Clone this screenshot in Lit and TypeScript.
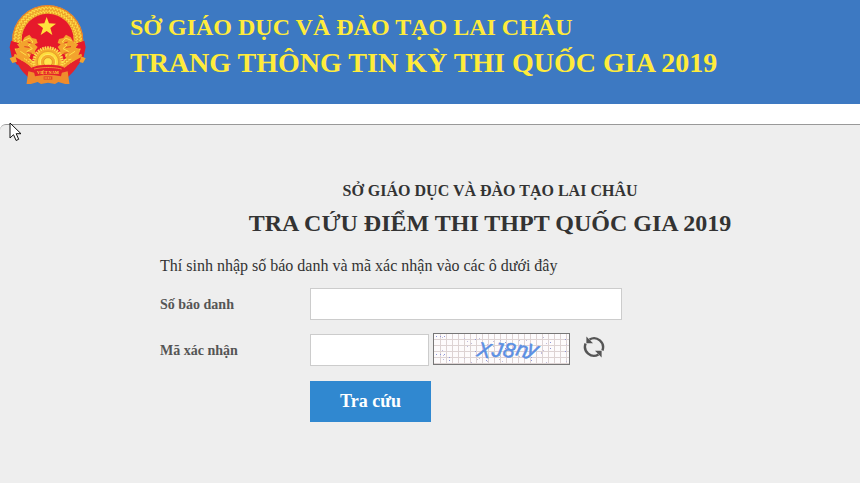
import { LitElement, html, css, svg } from "lit";
import { customElement, state } from "lit/decorators.js";

const RAYS = Array.from({ length: 36 }, (_, i) => i * 10);
const GRAINS = Array.from({ length: 49 }, (_, i) => -144 + i * 6);

@customElement("national-emblem")
class NationalEmblem extends LitElement {
  static styles = css`
    :host { display: block; }
    svg { display: block; width: 78px; height: 80px; }
    .legend { font: bold 13px "Liberation Serif", serif; fill: #ffd83a; }
  `;

  render() {
    return html`
      <svg viewBox="28 12 234 240" role="img" aria-label="Quốc huy Việt Nam">
        <circle cx="144" cy="122" r="107" fill="#f0a52c" />
        <circle cx="144" cy="122" r="105" fill="none" stroke="#e8772a" stroke-width="3" />
        ${GRAINS.map(a => svg`<g transform="rotate(${a} 144 122)">
          <path d="M139 20l5 7 5-7M139 31l5 7 5-7M140 42l4 5 4-5" fill="none" stroke="#ffe04a" stroke-width="3" />
          <path d="M147 22v22" stroke="#d98a1d" stroke-width="1" /></g>`)}
        <circle cx="144" cy="119" r="78" fill="#e6192b" />
        <path d="M141 51l7 19 21 1-17 13 6 21-17-12-18 12 7-21-17-13 21-1z" fill="#ffe23c" />
        <path d="M34 122l24 8 2 14-16 2 10 14-6 10 12 8 6 14-14 2-16-24-6-28z" fill="#e6192b" />
        <path d="M254 122l-24 8-2 14 16 2-10 14 6 10-12 8-6 14 14 2 16-24 6-28z" fill="#e6192b" />
        <path d="M75 112l14-8 8 10 13 3 4 12-9 4 9 8-8 12 4 12-16-4-8 20-14-8-12 10-22 6-8-14 22-10-6-14 14-8-8-10 13-5z" fill="#f3a32d" />
        <path d="M213 112l-14-8-8 10-13 3-4 12 9 4-9 8 8 12-4 12 16-4 8 20 14-8 12 10 22 6 8-14-22-10 6-14-14-8 8-10-13-5z" fill="#f3a32d" />
        <path d="M72 122l18-8 10 12-14 10 12 10-16 8 8 16M62 154l18 12M216 122l-18-8-10 12 14 10-12 10 16 8-8 16M226 154l-18 12" fill="none" stroke="#ffe04a" stroke-width="3" />
        <path d="M84 126l12 4M74 140l16 2M82 158l14 2M204 126l-12 4M214 140l-16 2M206 158l-14 2" stroke="#dd3924" stroke-width="3" />
        <circle cx="145" cy="186" r="42" fill="#f5ab2e" />
        ${RAYS.map(a => svg`<path d="M143 140l2 8 2-8z" fill="#ffe650" stroke="#ffe650" stroke-width="2" transform="rotate(${a} 145 186)" />`)}
        <circle cx="145" cy="186" r="32" fill="#ffdc3c" stroke="#d98820" stroke-width="2" />
        <circle cx="145" cy="186" r="23" fill="#f4ad2d" stroke="#ffee64" stroke-width="3" />
        <circle cx="145" cy="186" r="13" fill="#ffe64c" stroke="#d98820" stroke-width="2" />
        <path d="M48 172c16 8 34 18 48 30 30-10 70-10 100 0 14-12 32-22 48-30-4 18-14 34-24 44l-14 14H84L70 216c-10-10-18-26-22-44z" fill="#e4222b" />
        <path d="M44 164c18 10 40 20 54 38M246 164c-18 10-40 20-54 38" fill="none" stroke="#f3a32d" stroke-width="6" />
        <path d="M86 214l-6 42 34-10 10 6 21-4 21 4 10-6 34 10-6-42-24 6c-24-6-46-6-70 0z" fill="#ef8c2c" />
        <path d="M100 203c30-8 62-8 90 0l-6 26c-26-6-52-6-78 0z" fill="#e4222b" />
        <path d="M104 207c28-6 56-6 82 0" fill="none" stroke="#f7b436" stroke-width="3" stroke-dasharray="4 2" />
        <text class="legend" x="145" y="223" text-anchor="middle">VIỆT NAM</text>
        <path d="M132 229h26v10h-26z" fill="#e4452b" />
        <path d="M135 234h20" stroke="#ffd83a" stroke-width="3" stroke-dasharray="3 2" />
      </svg>
    `;
  }
}

const LINES_X = Array.from({ length: 22 }, (_, i) => 7 + i * 6);
const LINES_Y = [6, 12, 18, 24, 30];
const SPECKS = Array.from({ length: 64 }, (_, i) => ({
  x: 3 + ((i * 83 + i * i * 7) % 131),
  y: 3 + ((i * 17 + i * i * 3) % 27),
}));

@customElement("captcha-image")
class CaptchaImage extends LitElement {
  static styles = css`
    :host { display: block; }
    svg { display: block; width: 137px; height: 32px; }
    .code { font: italic 21px "Liberation Sans", sans-serif; fill: #5b8fe3; stroke: #5b8fe3; stroke-width: 0.5; }
  `;

  render() {
    return html`
      <svg viewBox="0 0 137 32" role="img" aria-label="Mã xác nhận XJ8ny">
        <rect width="137" height="32" fill="#fdfbfc" />
        ${LINES_X.map(x => svg`<path d="M${x + 0.5} 1v30" stroke="#ddd3d3" />`)}
        ${LINES_Y.map(y => svg`<path d="M1 ${y + 0.5}h135" stroke="#ddd3d3" />`)}
        ${SPECKS.map((p, i) => svg`<rect x=${p.x} y=${p.y} width="1" height="1" fill=${i % 3 ? "#c0bcdc" : "#8f96d8"} />`)}
        <text class="code" x="43 58 69 82 93" y="23 23 23 22 21" rotate="10 10 12 14 16">XJ8ny</text>
        <rect x="0.5" y="0.5" width="136" height="31" fill="none" stroke="#777" />
      </svg>
    `;
  }
}

@customElement("app-root")
class AppRoot extends LitElement {
  @state() private candidate = "";
  @state() private code = "";

  static styles = css`
    :host {
      display: flex;
      flex-direction: column;
      min-height: 100vh;
      background: #fff;
      color: #333;
      font-family: "Liberation Serif", "Times New Roman", serif;
      font-size: 16px;
    }
    * { box-sizing: border-box; }
    h1, h2, p { margin: 0; }
    .banner {
      display: flex;
      align-items: flex-start;
      gap: 43px;
      padding: 4px 9px 20px;
      background: #3d79c2;
      color: #ffeb3b;
    }
    .names { padding-top: 5px; font-weight: bold; }
    .agency { font-size: 24px; line-height: 36px; }
    .site { font-size: 28px; line-height: 36px; }
    .panel {
      flex: 1;
      margin-top: 20px;
      padding: 56px 40px 40px 160px;
      background: #eee;
      border-top: 1px solid #999;
      border-top-left-radius: 6px;
    }
    .heading { text-align: center; font-weight: bold; }
    .office { font-size: 16px; line-height: 20px; }
    .title { font-size: 24px; line-height: 44px; }
    .intro { line-height: 24px; padding-top: 9px; }
    .form { display: grid; grid-template-columns: 150px 1fr; row-gap: 14px; padding-top: 10px; align-items: center; }
    .label { padding-top: 2px; font-size: 14px; font-weight: bold; color: #555; }
    .field {
      height: 32px;
      padding: 0 8px;
      border: 1px solid #ccc;
      border-radius: 0;
      background: #fff;
      font: inherit;
      outline-color: #3088d0;
    }
    .wide { width: 312px; max-width: 100%; }
    .short { width: 119px; }
    .verify { display: flex; align-items: flex-end; gap: 4px; height: 32px; }
    captcha-image { margin-bottom: 1px; }
    .reload { display: block; margin: 0 0 7px 8px; padding: 0; border: 0; background: none; cursor: pointer; }
    .reload svg { display: block; width: 24px; height: 24px; }
    .submit {
      grid-column: 2;
      justify-self: start;
      height: 41px;
      margin-top: 1px;
      padding: 0 30px;
      border: 0;
      background: #3088d0;
      color: #fff;
      font: bold 18px "Liberation Serif", "Times New Roman", serif;
      cursor: pointer;
    }
    .pointer { position: absolute; left: 9px; top: 122px; width: 13px; height: 20px; pointer-events: none; }
  `;

  render() {
    return html`
      <header class="banner">
        <national-emblem></national-emblem>
        <div class="names">
          <p class="agency">SỞ GIÁO DỤC VÀ ĐÀO TẠO LAI CHÂU</p>
          <p class="site">TRANG THÔNG TIN KỲ THI QUỐC GIA 2019</p>
        </div>
      </header>
      <main class="panel">
        <div class="heading">
          <h2 class="office">SỞ GIÁO DỤC VÀ ĐÀO TẠO LAI CHÂU</h2>
          <h1 class="title">TRA CỨU ĐIỂM THI THPT QUỐC GIA 2019</h1>
        </div>
        <p class="intro">Thí sinh nhập số báo danh và mã xác nhận vào các ô dưới đây</p>
        <form class="form" @submit=${(e: Event) => e.preventDefault()}>
          <label class="label" for="candidate">Số báo danh</label>
          <input class="field wide" id="candidate" type="text" .value=${this.candidate}
            @input=${(e: Event) => (this.candidate = (e.target as HTMLInputElement).value)} />
          <label class="label" for="code">Mã xác nhận</label>
          <div class="verify">
            <input class="field short" id="code" type="text" autocomplete="off" .value=${this.code}
              @input=${(e: Event) => (this.code = (e.target as HTMLInputElement).value)} />
            <captcha-image></captcha-image>
            <button class="reload" type="button" aria-label="Đổi mã xác nhận">
              <svg viewBox="0 0 24 24" fill="none" stroke="#555" stroke-width="2.4">
                <path d="M7.5 4.5A9 9 0 0 1 20.4 15.5" />
                <path d="M16.5 19.5A9 9 0 0 1 3.6 8.5" />
                <path d="M4.4 1.6v6.6H11z" fill="#555" stroke="none" />
                <path d="M19.6 22.4v-6.6H13z" fill="#555" stroke="none" />
              </svg>
            </button>
          </div>
          <button class="submit" type="submit">Tra cứu</button>
        </form>
      </main>
      <svg class="pointer" viewBox="0 0 13 20" aria-hidden="true">
        <path d="M1 1v15l3.5-3.3 2.6 5.8 2.6-1.2-2.5-5.6H12z" fill="#fff" stroke="#111" />
      </svg>
    `;
  }
}
